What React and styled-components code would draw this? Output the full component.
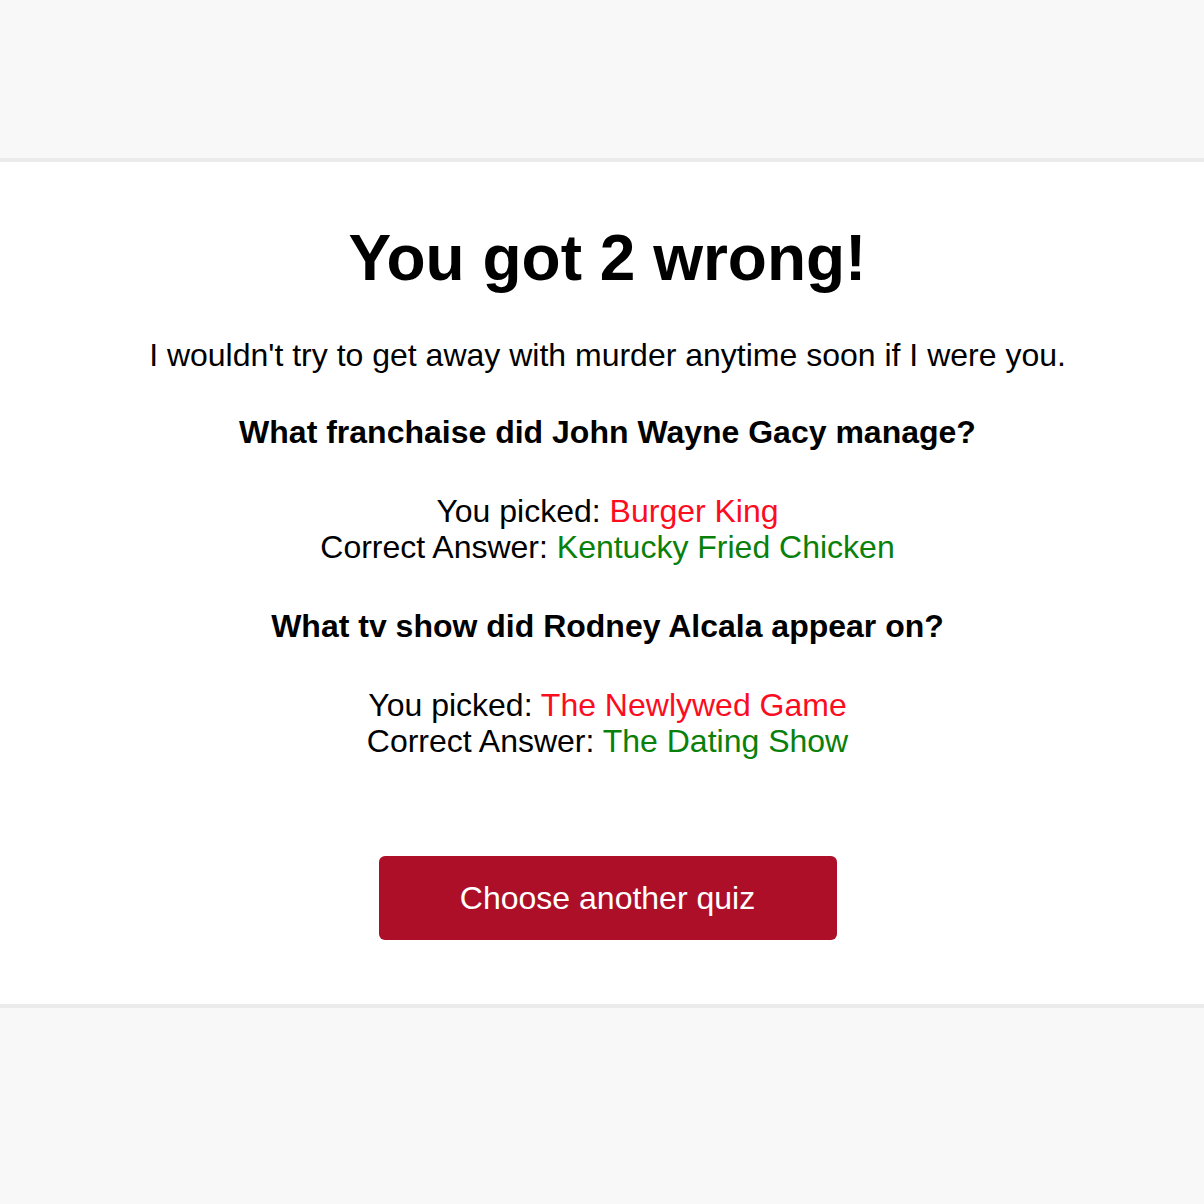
import React from "react";
import styled, { createGlobalStyle } from "styled-components";

const GlobalStyle = createGlobalStyle`
  html, body {
    margin: 0;
    padding: 0;
    background: #f8f8f8;
    font-family: "Liberation Sans", Arial, Helvetica, sans-serif;
    color: #000;
  }
  * { box-sizing: border-box; }
`;

const Page = styled.div`
  min-height: 100vh;
  display: flex;
  flex-direction: column;
  padding-top: 158px;
`;

const Panel = styled.main`
  background: #fff;
  border-top: 4px solid #ebebeb;
  border-bottom: 4px solid #ebebeb;
  padding: 59px 19px 64px 30px;
  display: flex;
  flex-direction: column;
  align-items: center;
  text-align: center;
`;

const Title = styled.h1`
  margin: 0 0 42px;
  font-size: 64px;
  line-height: 74px;
  font-weight: 700;
`;

const Lead = styled.p`
  margin: 0 0 41px;
  font-size: 32px;
  line-height: 36px;
  font-weight: 400;
`;

const Result = styled.section`
  display: flex;
  flex-direction: column;
  align-items: center;
  gap: 43px;
  margin-bottom: ${(p) => (p.$last ? "97px" : "43px")};
`;

const Question = styled.h2`
  margin: 0;
  font-size: 32px;
  line-height: 36px;
  font-weight: 700;
`;

const Answers = styled.div`
  font-size: 32px;
  line-height: 36px;
`;

const Line = styled.div``;

const Choice = styled.span`
  color: ${(p) => (p.$correct ? "#098009" : "#fb0d1f")};
`;

const Button = styled.button`
  width: 458px;
  height: 84px;
  border: none;
  border-radius: 6px;
  background: #ad0f29;
  color: #fff;
  font-family: inherit;
  font-size: 32px;
  display: flex;
  align-items: center;
  justify-content: center;
  cursor: pointer;
`;

const results = [
  {
    q: "What franchaise did John Wayne Gacy manage?",
    picked: "Burger King",
    correct: "Kentucky Fried Chicken",
  },
  {
    q: "What tv show did Rodney Alcala appear on?",
    picked: "The Newlywed Game",
    correct: "The Dating Show",
  },
];

export default function App() {
  return (
    <>
      <GlobalStyle />
      <Page>
        <Panel>
          <Title>You got 2 wrong!</Title>
          <Lead>I wouldn't try to get away with murder anytime soon if I were you.</Lead>
          {results.map((r, i) => (
            <Result key={i} $last={i === results.length - 1}>
              <Question>{r.q}</Question>
              <Answers>
                <Line>
                  You picked: <Choice>{r.picked}</Choice>
                </Line>
                <Line>
                  Correct Answer: <Choice $correct>{r.correct}</Choice>
                </Line>
              </Answers>
            </Result>
          ))}
          <Button>Choose another quiz</Button>
        </Panel>
      </Page>
    </>
  );
}
